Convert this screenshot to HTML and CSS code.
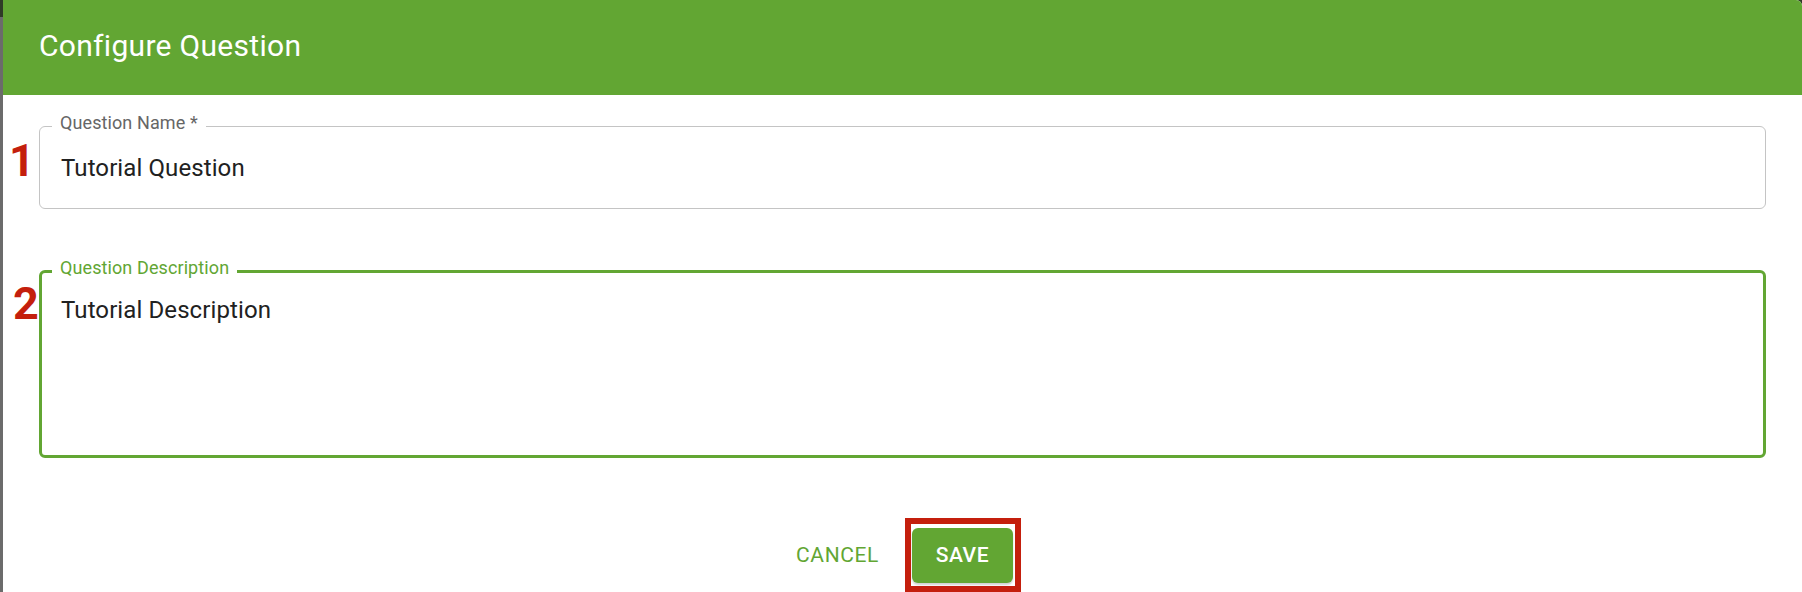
FILE: index.html
```html
<!DOCTYPE html>
<html lang="en">
<head>
<meta charset="utf-8">
<title>Configure Question</title>
<link rel="stylesheet" href="styles.css">
</head>
<body>
<div class="dialog">
  <header class="dialog-header">
    <h1 class="dialog-title">Configure Question</h1>
  </header>
  <div class="dialog-body">
    <div class="field-row row-name">
      <span class="step step-1">1</span>
      <fieldset class="field">
        <legend class="field-label">Question Name *</legend>
        <div class="field-value">Tutorial Question</div>
      </fieldset>
    </div>
    <div class="field-row row-desc">
      <span class="step step-2">2</span>
      <fieldset class="field field-focused">
        <legend class="field-label">Question Description</legend>
        <div class="field-value field-multiline">Tutorial Description</div>
      </fieldset>
    </div>
  </div>
  <div class="dialog-actions">
    <button class="btn btn-text" type="button">Cancel</button>
    <div class="highlight">
      <button class="btn btn-contained" type="button">Save</button>
    </div>
  </div>
</div>
</body>
</html>
```
FILE: styles.css
```css
html, body {
  margin: 0;
  padding: 0;
}

body {
  width: 1802px;
  height: 592px;
  overflow: hidden;
  background: linear-gradient(#2f3b27 0, #2f3b27 17px, #6b6b6b 17px, #6b6b6b 100%);
  font-family: Roboto, "Liberation Sans", Arial, sans-serif;
}

.dialog {
  margin-left: 3px;
  width: 1799px;
  height: 592px;
  background: #ffffff;
  border-top-right-radius: 6px;
  overflow: hidden;
  display: flex;
  flex-direction: column;
}

.dialog-header {
  height: 95px;
  box-sizing: border-box;
  background: #62a633;
  padding: 28px 0 0 36px;
  flex: none;
}

.dialog-title {
  margin: 0;
  font-size: 30px;
  line-height: 35px;
  font-weight: 400;
  letter-spacing: 0.3px;
  color: #ffffff;
}

.dialog-body {
  display: flex;
  flex-direction: column;
  padding-right: 36px;
}

.field-row {
  display: flex;
  align-items: flex-start;
}

.row-name {
  margin-top: 16px;
}

.row-desc {
  margin-top: 47px;
}

.step {
  width: 36px;
  flex: none;
  box-sizing: border-box;
  margin-top: 25px;
  font-size: 45px;
  line-height: 45px;
  font-weight: 700;
  color: #c41f0d;
}

.step-1 {
  padding-left: 6px;
  margin-top: 27px;
}

.step-2 {
  padding-left: 10px;
}

.field {
  flex: 1;
  margin: 0;
  min-width: 0;
  border: 1px solid #c4c4c4;
  border-radius: 6px;
  padding: 0 12px 0 12px;
}

.field-focused {
  border: 3px solid #62a633;
  padding-left: 10px;
}

.field-label {
  padding: 0 8px 6px 8px;
  font-size: 18px;
  line-height: 24px;
  color: #666666;
  letter-spacing: 0.1px;
}

.field-focused .field-label {
  color: #62a633;
}

.field-value {
  padding: 13px 0 26px 9px;
  font-size: 24px;
  line-height: 28px;
  color: #212121;
  letter-spacing: 0.1px;
}

.field-multiline {
  height: 133px;
  box-sizing: content-box;
  padding-top: 10px;
  padding-bottom: 26px;
}

.dialog-actions {
  margin-top: 60px;
  display: flex;
  justify-content: center;
  align-items: center;
  gap: 14px;
}

.btn {
  font-family: Roboto, "Liberation Sans", Arial, sans-serif;
  font-size: 21px;
  text-transform: uppercase;
  letter-spacing: 0.6px;
  border: none;
  border-radius: 6px;
  cursor: pointer;
}

.btn-text {
  background: transparent;
  color: #62a633;
  font-weight: 400;
  padding: 14px 12px;
  line-height: 25px;
}

.highlight {
  border: 6px solid #c41f0d;
  padding: 4px 2px 3px 1px;
  background: #ffffff;
}

.btn-contained {
  display: block;
  background: #62a633;
  color: #ffffff;
  font-weight: 500;
  width: 101px;
  height: 55px;
  padding: 0;
  line-height: 55px;
  box-shadow: 0 2px 2px rgba(0, 0, 0, 0.18);
}
```
